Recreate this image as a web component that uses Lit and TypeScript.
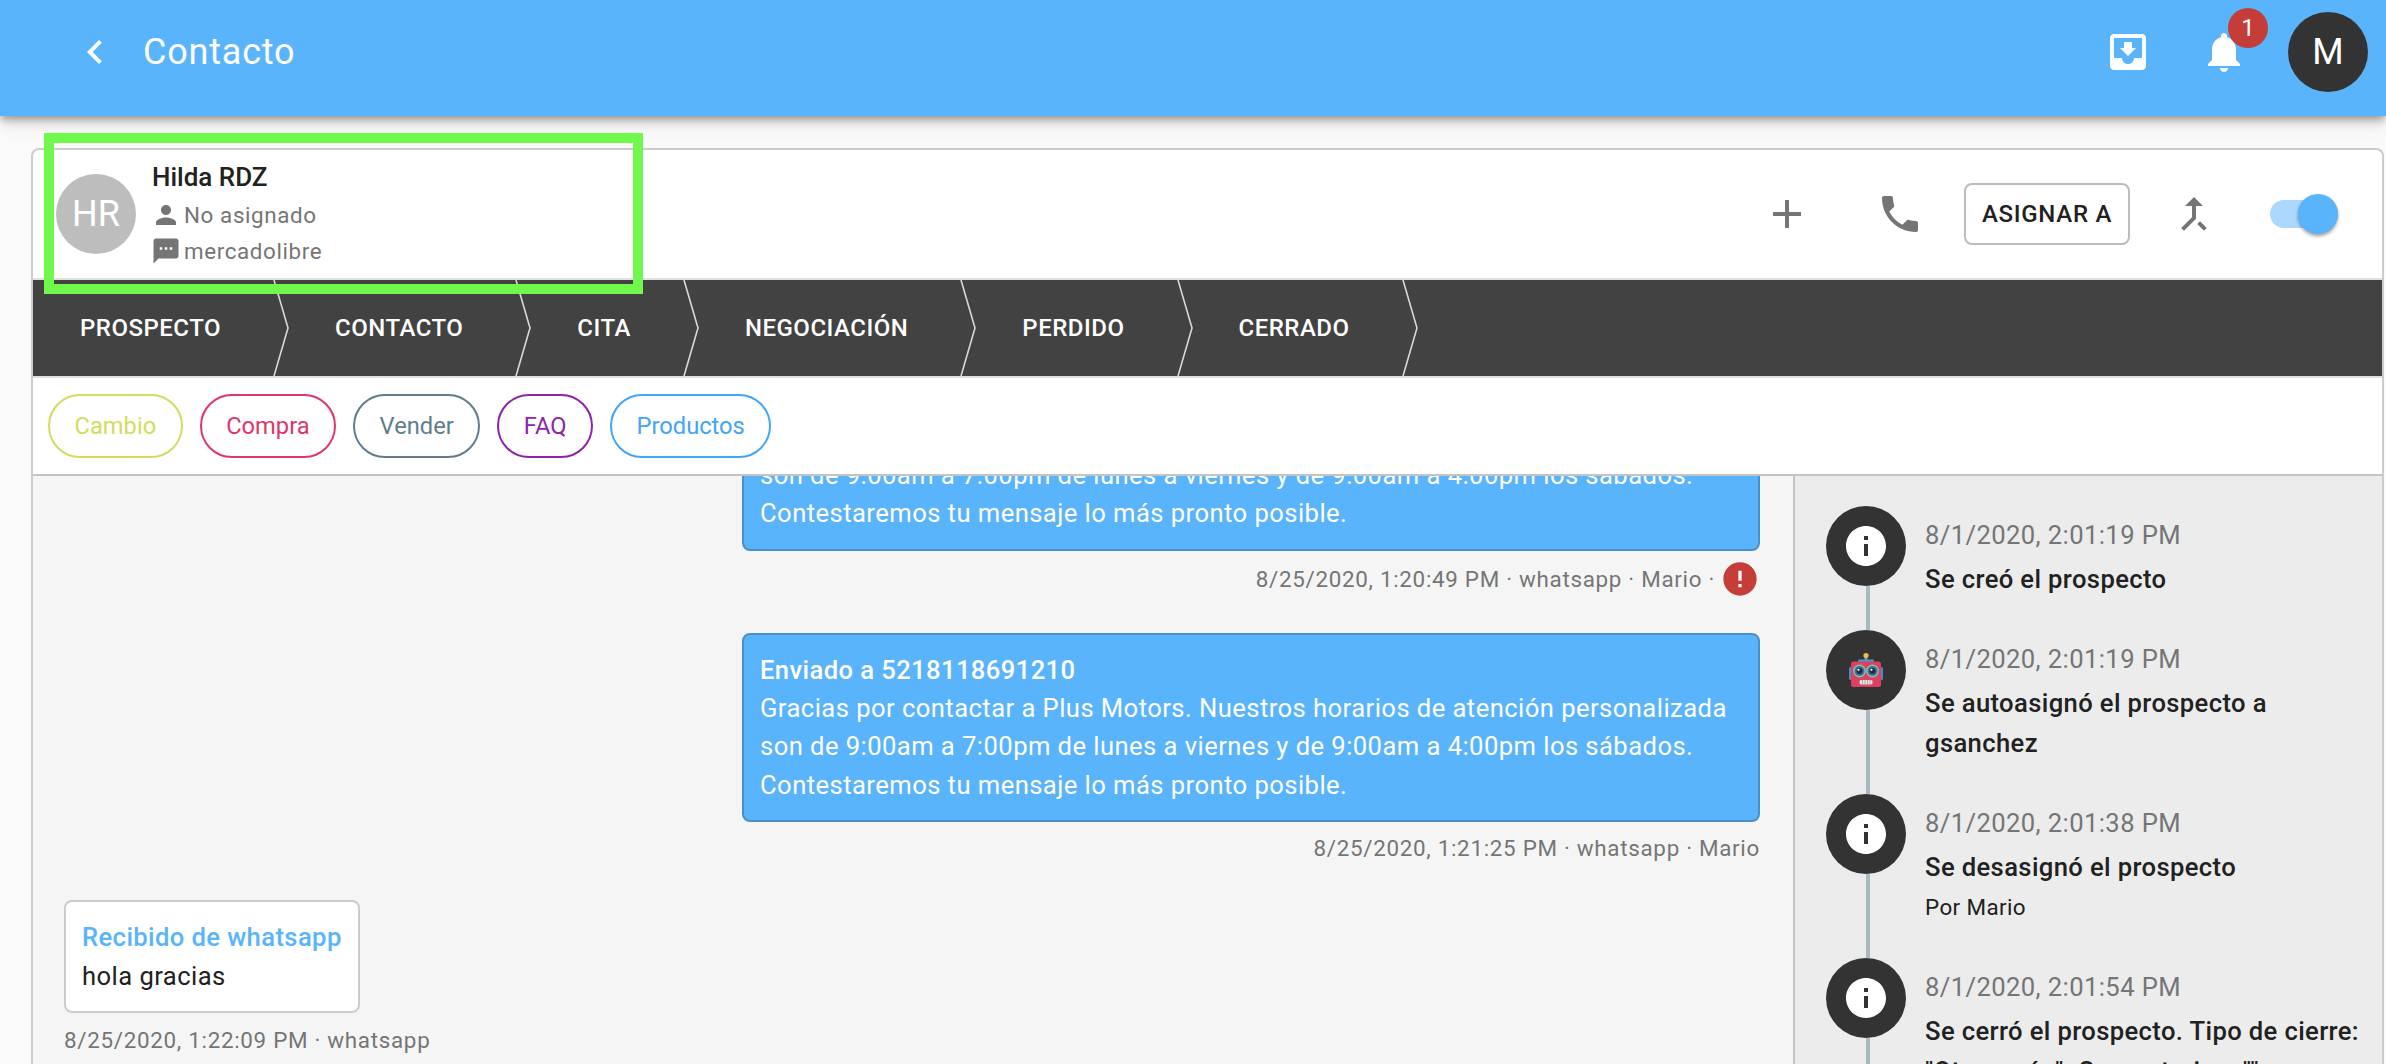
import { LitElement, html, css, svg } from "lit";
import { customElement } from "lit/decorators.js";

const icon = (d: string, cls = "") => html`<svg class="ic ${cls}" viewBox="0 0 24 24"><path d=${d}></path></svg>`;
const P = {
  back: "M15.41 7.41L14 6l-6 6 6 6 1.41-1.41L10.83 12z",
  inbox: "M19 3H4.99c-1.11 0-1.98.89-1.98 2L3 19c0 1.1.88 2 1.99 2H19c1.1 0 2-.9 2-2V5c0-1.11-.9-2-2-2zm0 12h-4c0 1.66-1.35 3-3 3s-3-1.34-3-3H4.99V5H19v10zm-3-5h-2V7h-4v3H8l4 4 4-4z",
  bell: "M12 22c1.1 0 2-.9 2-2h-4c0 1.1.89 2 2 2zm6-6v-5c0-3.07-1.64-5.64-4.5-6.32V4c0-.83-.67-1.5-1.5-1.5s-1.5.67-1.5 1.5v.68C7.63 5.36 6 7.92 6 11v5l-2 2v1h16v-1l-2-2z",
  person: "M12 12c2.21 0 4-1.79 4-4s-1.79-4-4-4-4 1.79-4 4 1.79 4 4 4zm0 2c-2.67 0-8 1.34-8 4v2h16v-2c0-2.66-5.33-4-8-4z",
  sms: "M20 2H4c-1.1 0-1.99.9-1.99 2L2 22l4-4h14c1.1 0 2-.9 2-2V4c0-1.1-.9-2-2-2zM9 11H7V9h2v2zm4 0h-2V9h2v2zm4 0h-2V9h2v2z",
  plus: "M19 13h-6v6h-2v-6H5v-2h6V5h2v6h6v2z",
  phone: "M6.62 10.79c1.44 2.83 3.76 5.14 6.59 6.59l2.2-2.2c.27-.27.67-.36 1.02-.24 1.12.37 2.33.57 3.57.57.55 0 1 .45 1 1V20c0 .55-.45 1-1 1-9.39 0-17-7.61-17-17 0-.55.45-1 1-1h3.5c.55 0 1 .45 1 1 0 1.25.2 2.45.57 3.57.11.35.03.74-.25 1.02l-2.2 2.2z",
  merge: "M17 20.41L18.41 19 15 15.59 13.59 17 17 20.41zM7.5 8H11v5.59L5.59 19 7 20.41l6-6V8h3.5L12 3.5 7.5 8z",
  error: "M12 2C6.48 2 2 6.48 2 12s4.48 10 10 10 10-4.48 10-10S17.52 2 12 2zm1 15h-2v-2h2v2zm0-4h-2V7h2v6z",
  info: "M12 2C6.48 2 2 6.48 2 12s4.48 10 10 10 10-4.48 10-10S17.52 2 12 2zm1 15h-2v-6h2v6zm0-8h-2V7h2v2z",
};

const STAGES = ["PROSPECTO", "CONTACTO", "CITA", "NEGOCIACIÓN", "PERDIDO", "CERRADO"];
const CHIPS = [
  ["Cambio", "c-lime"],
  ["Compra", "c-pink"],
  ["Vender", "c-grey"],
  ["FAQ", "c-purple"],
  ["Productos", "c-blue"],
];
const MSG = "Gracias por contactar a Plus Motors. Nuestros horarios de atención personalizada son de 9:00am a 7:00pm de lunes a viernes y de 9:00am a 4:00pm los sábados. Contestaremos tu mensaje lo más pronto posible.";

const robot = svg`<svg class="robot" viewBox="0 0 34 34">
  <rect x="15.6" y="2" width="2.8" height="6" fill="#8d99a3"/>
  <circle cx="17" cy="2.6" r="2.6" fill="#f2b84b"/>
  <rect x="9" y="6.5" width="16" height="3" rx="1" fill="#3f9bd9"/>
  <rect x="0" y="14" width="4" height="13" rx="1.5" fill="#3f8fd0"/>
  <rect x="30" y="14" width="4" height="13" rx="1.5" fill="#3f8fd0"/>
  <rect x="2" y="8.5" width="30" height="25.5" rx="2.5" fill="#e0405f"/>
  <circle cx="10.5" cy="18" r="6.4" fill="#7fc4b4"/>
  <circle cx="23.5" cy="18" r="6.4" fill="#7fc4b4"/>
  <circle cx="10.5" cy="18" r="5" fill="#3d6f99"/>
  <circle cx="23.5" cy="18" r="5" fill="#3d6f99"/>
  <circle cx="10.5" cy="18" r="3" fill="#1d2e40"/>
  <circle cx="23.5" cy="18" r="3" fill="#1d2e40"/>
  <circle cx="9.5" cy="16.8" r="1.1" fill="#ffffff"/>
  <circle cx="22.5" cy="16.8" r="1.1" fill="#ffffff"/>
  <rect x="10.5" y="27" width="13" height="4.4" rx="1.6" fill="#e7e7ea"/>
  <path d="M13.5 27v4.4M16 27v4.4M18.5 27v4.4M21 27v4.4" stroke="#8c8c95" stroke-width=".7"/>
</svg>`;

@customElement("app-root")
export class AppRoot extends LitElement {
  static styles = css`
    :host {
      display: block;
      position: relative;
      height: 100vh;
      overflow: hidden;
      background: #fafafa;
      font-family: Roboto, "Liberation Sans", sans-serif;
      color: #212121;
    }
    .page { display: flex; flex-direction: column; height: 100%; }
    .ic { width: 48px; height: 48px; flex: none; display: block; fill: currentColor; }
    .topbar {
      flex: none;
      height: 116px;
      box-sizing: border-box;
      padding: 0 18px 12px 71px;
      display: flex;
      align-items: center;
      background: #5ab4fb;
      color: #fff;
      box-shadow: 0 4px 8px -1px rgba(0,0,0,.35), 0 8px 16px rgba(0,0,0,.12);
      position: relative;
      z-index: 2;
    }
    .title { font-size: 36px; font-weight: 400; margin-left: 24px; flex: 1; letter-spacing: .8px; }
    .bell-wrap { position: relative; margin-left: 48px; height: 48px; }
    .badge {
      position: absolute; left: 28px; top: -20px;
      width: 40px; height: 40px; border-radius: 50%;
      background: #c43d38; color: #fff; font-size: 24px;
      display: flex; align-items: center; justify-content: center;
    }
    .me {
      width: 80px; height: 80px; border-radius: 50%;
      margin-left: 40px;
      background: #333; color: #fff; font-size: 36px;
      display: flex; align-items: center; justify-content: center;
    }
    .main { flex: 1; min-height: 0; display: flex; padding: 32px 2px 0 31px; }
    .card {
      flex: 1; min-width: 0;
      border: 2px solid #ccc; border-bottom: 0;
      border-radius: 8px 8px 0 0;
      display: flex; flex-direction: column;
      overflow: hidden;
      background: #fff;
    }
    .head {
      flex: none; height: 128px;
      display: flex; align-items: center;
      padding: 0 44px 0 23px;
      border-bottom: 2px solid #e0e0e0;
    }
    .avatar {
      width: 80px; height: 80px; border-radius: 50%;
      background: #bdbdbd; color: #fff; font-size: 36px;
      display: flex; align-items: center; justify-content: center;
      flex: none;
    }
    .who { margin-left: 15px; flex: 1; display: flex; flex-direction: column; }
    .name { font-size: 26px; font-weight: 500; line-height: 36px; margin-left: 1px; margin-bottom: 2px; color: #212121; }
    .sub { display: flex; align-items: center; height: 36px; font-size: 22.4px; color: #757575; letter-spacing: .6px; }
    .sub .ic { width: 30px; height: 30px; margin-right: 3px; }
    .act { color: #757575; }
    .gap-phone { margin-left: 65px; }
    .assign {
      margin-left: 40px; width: 166px; height: 62px; box-sizing: border-box;
      border: 2px solid #bdbdbd; border-radius: 8px;
      display: flex; align-items: center; justify-content: center;
      font-size: 24px; font-weight: 500; letter-spacing: .7px; color: #212121;
    }
    .gap-merge { margin-left: 40px; }
    .switch { margin-left: 52px; width: 68px; height: 28px; border-radius: 14px; background: #acd8fd; display: flex; justify-content: flex-end; align-items: center; }
    .thumb { width: 40px; height: 40px; border-radius: 50%; background: #5ab4fb; flex: none; box-shadow: 0 2px 3px rgba(0,0,0,.25), 0 2px 4px rgba(0,0,0,.15); }
    .stages {
      flex: none; height: 96px;
      background: #424242; color: #fff;
      display: flex; align-items: stretch;
      padding-left: 47px;
      border-bottom: 2px solid #e0e0e0;
    }
    .stage { display: flex; align-items: center; font-size: 24px; font-weight: 500; letter-spacing: .5px; }
    .chev { width: 16px; height: 96px; margin: 0 46px 0 52px; flex: none; fill: none; stroke: #d8d8d8; stroke-width: 1.6; }
    .chips {
      flex: none; height: 98px; box-sizing: border-box;
      display: flex; align-items: center; gap: 17px;
      padding-left: 15px;
      border-bottom: 2px solid #c4c4c4;
    }
    .chip {
      height: 64px; box-sizing: border-box; padding: 0 24.5px;
      border: 2px solid currentColor; border-radius: 32px;
      font-size: 23.7px; display: flex; align-items: center;
    }
    .c-lime { color: #d4dc5c; }
    .c-pink { color: #e0356a; }
    .c-grey { color: #607d8b; }
    .c-purple { color: #8e24aa; }
    .c-blue { color: #42a5f5; }
    .body { flex: 1; min-height: 0; display: flex; }
    .chat {
      flex: none; width: 1760px; box-sizing: border-box;
      background: #f5f5f5; overflow: hidden;
      padding: 0 33px 8px 31px;
      display: flex; flex-direction: column; justify-content: flex-end;
    }
    .bubble {
      box-sizing: border-box; border-radius: 8px; padding: 16px;
      font-size: 25.6px; line-height: 38.4px; letter-spacing: .44px;
    }
    .out { align-self: flex-end; width: 1018px; flex: none; background: #5ab4fb; color: #fff; border: 2px solid #4a90c8; }
    .in { align-self: flex-start; flex: none; background: #fff; border: 2px solid #ccc; color: #212121; }
    .b-title { font-weight: 500; letter-spacing: .4px; }
    .in .b-title { color: #5ab4fb; }
    .meta { flex: none; display: flex; align-items: center; font-size: 22.4px; line-height: 32px; color: #757575; letter-spacing: .7px; margin: 10px 0 36px; }
    .meta.right { justify-content: flex-end; }
    .meta.last { margin: 11px 0 0; }
    .meta.flag { margin: 8px 0 34px; }
    .meta .ic { width: 40px; height: 40px; color: #c43d38; margin-left: 5px; }
    .log {
      flex: 1; min-width: 0; box-sizing: border-box;
      background: #ececec; border-left: 2px solid #c4c4c4;
      padding: 30px 0 0 31px; overflow: hidden;
    }
    .item { display: flex; }
    .rail { width: 80px; flex: none; display: flex; flex-direction: column; }
    .dot { width: 80px; height: 80px; border-radius: 50%; background: #333; flex: none; color: #fff; display: flex; align-items: center; justify-content: center; }
    .line { width: 4px; flex: 1; margin-left: 40px; background: #a9b9c2; }
    .robot { width: 34px; height: 34px; display: block; }
    .txt { margin-left: 19px; padding: 9px 0 31px; flex: 1; min-width: 0; font-size: 25.6px; line-height: 40px; }
    .time { color: #757575; letter-spacing: .4px; margin-bottom: 4px; }
    .what { font-weight: 500; letter-spacing: .38px; color: #212121; }
    .by { font-size: 22.4px; letter-spacing: .4px; color: #212121; }
    .mark {
      position: absolute; left: 44px; top: 133px;
      width: 599px; height: 161px; box-sizing: border-box;
      border: 10px solid #70f94c; z-index: 3; pointer-events: none;
    }
  `;

  private item(time: string, what: string, by = "", isBot = false) {
    return html`<div class="item">
      <div class="rail">
        <div class="dot">${isBot ? robot : icon(P.info)}</div>
        <div class="line"></div>
      </div>
      <div class="txt">
        <div class="time">${time}</div>
        <div class="what">${what}</div>
        ${by ? html`<div class="by">${by}</div>` : ""}
      </div>
    </div>`;
  }

  render() {
    return html`
      <div class="page">
        <header class="topbar">
          ${icon(P.back)}
          <div class="title">Contacto</div>
          ${icon(P.inbox)}
          <div class="bell-wrap">${icon(P.bell)}<div class="badge">1</div></div>
          <div class="me">M</div>
        </header>
        <div class="main">
          <section class="card">
            <div class="head">
              <div class="avatar">HR</div>
              <div class="who">
                <div class="name">Hilda RDZ</div>
                <div class="sub">${icon(P.person)}No asignado</div>
                <div class="sub">${icon(P.sms)}mercadolibre</div>
              </div>
              <div class="act">${icon(P.plus)}</div>
              <div class="act gap-phone">${icon(P.phone)}</div>
              <div class="assign">ASIGNAR A</div>
              <div class="act gap-merge">${icon(P.merge)}</div>
              <div class="switch"><div class="thumb"></div></div>
            </div>
            <div class="stages">
              ${STAGES.map(
                (s) => html`<div class="stage">${s}<svg class="chev" viewBox="0 0 16 96" preserveAspectRatio="none"><path d="M1 0 L15 48 L1 96"></path></svg></div>`
              )}
            </div>
            <div class="chips">
              ${CHIPS.map(([t, c]) => html`<div class="chip ${c}">${t}</div>`)}
            </div>
            <div class="body">
              <div class="chat">
                <div class="bubble out"><div class="b-title">Enviado a 5218118691210</div>${MSG}</div>
                <div class="meta right flag">8/25/2020, 1:20:49 PM · whatsapp · Mario ·${icon(P.error)}</div>
                <div class="bubble out"><div class="b-title">Enviado a 5218118691210</div>${MSG}</div>
                <div class="meta right">8/25/2020, 1:21:25 PM · whatsapp · Mario</div>
                <div class="bubble in"><div class="b-title">Recibido de whatsapp</div>hola gracias</div>
                <div class="meta last">8/25/2020, 1:22:09 PM · whatsapp</div>
              </div>
              <aside class="log">
                ${this.item("8/1/2020, 2:01:19 PM", "Se creó el prospecto")}
                ${this.item("8/1/2020, 2:01:19 PM", "Se autoasignó el prospecto a gsanchez", "", true)}
                ${this.item("8/1/2020, 2:01:38 PM", "Se desasignó el prospecto", "Por Mario")}
                ${this.item("8/1/2020, 2:01:54 PM", "Se cerró el prospecto. Tipo de cierre: \"Otra razón\". Comentarios: \"\"")}
              </aside>
            </div>
          </section>
        </div>
      </div>
      <div class="mark"></div>
    `;
  }
}
